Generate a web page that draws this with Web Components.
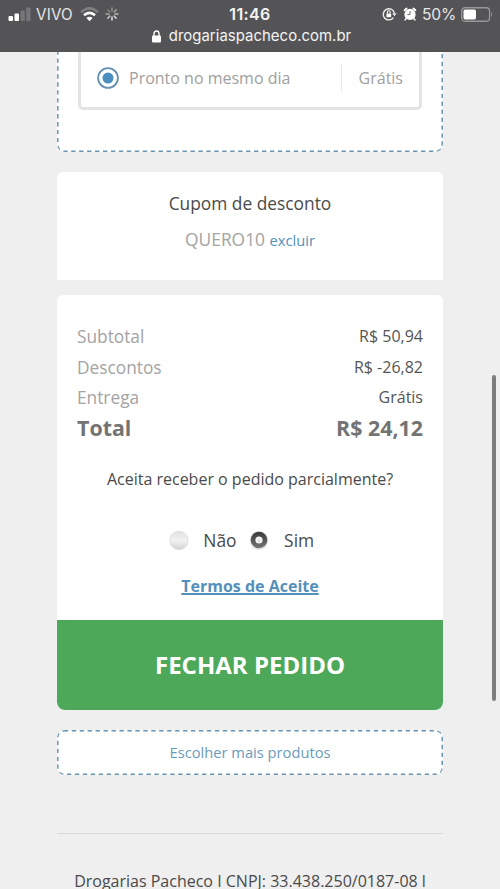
<!DOCTYPE html>
<html lang="pt-BR">
<head>
<meta charset="utf-8">
<title>Drogarias Pacheco</title>
<style>
html,body{margin:0;height:889px;overflow:hidden;background:#efefef}
body{font-family:"Open Sans","Noto Sans",sans-serif;color:#4a4a4a}
</style>
</head>
<body>
<checkout-page></checkout-page>
<script>
const define=(name,html)=>{
  const t=document.createElement('template');
  t.innerHTML=html;
  customElements.define(name,class extends HTMLElement{
    constructor(){super();this.attachShadow({mode:'open'}).append(t.content.cloneNode(true));}
  });
};

define('status-bar',`<style>
:host{display:block;flex:none;height:52px;background:#545456;color:#f4f4f4;font-family:Inter,sans-serif;overflow:hidden}
.top{display:grid;grid-template-columns:1fr auto 1fr;align-items:center;height:28px}
.l{display:flex;align-items:center;padding-left:8px}
.r{display:flex;align-items:center;justify-content:flex-end;padding-right:7px}
.c{font-weight:600;font-size:16px;letter-spacing:.35px}
.l span{font-size:15.2px;letter-spacing:.2px;margin:0 7px 0 5px;color:#e6e6e6}
.r span{font-size:15.6px;letter-spacing:-.2px;margin:0 5px 0 5px;color:#e6e6e6}
.url{display:flex;align-items:center;justify-content:center;height:16px;gap:8px;font-size:14.9px;letter-spacing:.05px;padding-left:3px}
svg{display:block;flex:none}
</style>
<div class="top">
<div class="l">
<svg width="23" height="15" viewBox="0 0 23 15"><g fill="#fff"><rect x=".5" y="9" width="4.5" height="5" rx="1"/><rect x="6.5" y="6.5" width="4.5" height="7.5" rx="1"/></g><g fill="#77777a"><rect x="12.5" y="3.5" width="4.3" height="10.5" rx="1"/><rect x="18.2" y="0.5" width="4.3" height="13.5" rx="1"/></g></svg>
<span>VIVO</span>
<svg width="19" height="15" viewBox="0 0 19 15" fill="none"><path d="M1 5.2Q9.5-2.4 18 5.2" stroke="#7d7d7f" stroke-width="2.7"/><path d="M4 8.3Q9.5 3.3 15 8.3" stroke="#fff" stroke-width="2.7"/><path d="M6.4 11Q9.5 8.6 12.6 11L9.5 14.2Z" fill="#fff"/></svg>
<svg style="margin-left:6px" width="14" height="14" viewBox="-7 -7 14 14" stroke-width="1.4" stroke-linecap="round"><path d="M0-3V-6" stroke="#999"/><path d="M2.1-2.1L4.2-4.2" stroke="#aaa"/><path d="M3 0H6" stroke="#bbb"/><path d="M2.1 2.1L4.2 4.2" stroke="#ddd"/><path d="M0 3V6" stroke="#eee"/><path d="M-2.1 2.1L-4.2 4.2" stroke="#ccc"/><path d="M-3 0H-6" stroke="#aaa"/><path d="M-2.1-2.1L-4.2-4.2" stroke="#888"/></svg>
</div>
<div class="c">11:46</div>
<div class="r">
<svg width="15" height="14" viewBox="0 0 15 14"><path d="M11.4 10.6A5.6 5.6 0 1 1 12.3 6" fill="none" stroke="#eee" stroke-width="1.4"/><path d="M10.2 6.2H14.6L12.4 9.2Z" fill="#eee"/><rect x="4.4" y="6.4" width="4.8" height="3.8" rx=".6" fill="#fff"/><path d="M5.4 6.6V5.2a1.4 1.4 0 0 1 2.8 0V6.6" fill="none" stroke="#fff" stroke-width="1.1"/></svg>
<svg style="margin-left:6px" width="14" height="14" viewBox="0 0 14 14"><circle cx="7" cy="7.4" r="5.6" fill="#fff"/><path d="M1.6 3.2L3.6 1.5M12.4 3.2L10.4 1.5" stroke="#fff" stroke-width="1.9" stroke-linecap="round"/><path d="M3.2 11.5L2 13M10.8 11.5L12 13" stroke="#fff" stroke-width="1.4" stroke-linecap="round"/><path d="M7 4V7.6H4.4" fill="none" stroke="#666" stroke-width="1"/></svg>
<span>50%</span>
<svg width="32" height="15" viewBox="0 0 32 15"><rect x=".75" y=".75" width="27.8" height="13.5" rx="3.2" fill="none" stroke="#98989a" stroke-width="1.3"/><rect x="2.5" y="2.5" width="12.5" height="10" rx="1.7" fill="#fff"/><path d="M30 5Q32 7.5 30 10Z" fill="#98989a"/></svg>
</div></div>
<div class="url"><svg width="9" height="13" viewBox="0 0 9 13"><rect y="5.5" width="9" height="7" rx="1.1" fill="#fff"/><path d="M2 6V3.7a2.5 2.7 0 0 1 5 0V6" fill="none" stroke="#fff" stroke-width="1.4"/></svg><span>drogariaspacheco.com.br</span></div>`);

define('dashed-panel',`<style>
:host{display:grid;width:386px;box-sizing:border-box;overflow:hidden;border-radius:8px;background:#fff}
svg,.b{grid-area:1/1;min-width:0}
svg{width:100%;height:100%;display:block}
rect{x:.8px;y:.8px;width:calc(100% - 1.6px);height:calc(100% - 1.6px);fill:none;stroke:#6894b2;stroke-width:1.5px;stroke-dasharray:4.4 3.55}
:host([open-top]){border-radius:0 0 8px 8px}
:host([open-top]) rect{y:-20px;height:calc(100% + 19.2px)}
</style><svg><rect rx="6"/></svg><div class="b"><slot></slot></div>`);

define('shipping-option',`<style>
:host{display:flex;align-items:center;box-sizing:border-box;width:344px;height:58px;margin:0 0 0 21px;border:3px solid #e4e4e4;border-top:0;border-radius:0 0 5px 5px;padding:0 16px 3px;color:#a0a0a0;font-size:16px}
svg{margin-right:10px;flex:none}
.p{margin-left:auto;border-left:1px solid #e8e8e8;height:28px;line-height:28px;padding-left:17px}
</style><svg width="22" height="22" viewBox="0 0 22 22"><circle cx="11" cy="11" r="9.9" fill="#fff" stroke="#6590b0" stroke-width="1.8"/><circle cx="11" cy="11" r="5.5" fill="#4b8fc0"/></svg><slot></slot><span class="p"><slot name="price"></slot></span>`);

define('coupon-card',`<style>
:host{display:block;height:108px;background:#fff;border-radius:6px 6px 0 0;text-align:center;box-sizing:border-box;padding-top:18px}
.t{font-size:17.35px;line-height:26px}
.v{font-size:17.4px;line-height:26px;margin-top:10px;color:#a3a3a3}
a{font-size:14.7px;color:#5490bb}
</style><div class="t"><slot></slot></div><div class="v"><slot name="code"></slot> <a>excluir</a></div>`);

define('summary-row',`<style>
:host{display:flex;justify-content:space-between;height:30.7px;line-height:30px;font-size:17.3px;color:#a3a3a3}
.v{color:#555;font-size:16px;line-height:28px}
:host([total]),:host([total]) .v{font-weight:700;color:#737373;font-size:21.4px;line-height:28px}
</style><span><slot></slot></span><span class="v"><slot name="value"></slot></span>`);

define('radio-choice',`<style>
:host{display:inline-flex;align-items:center;font-size:17.4px;line-height:24px}
svg{margin-right:13.5px}
.on{display:none}
:host([checked]) .on{display:block}
:host([checked]) .off{display:none}
:host([checked]) svg{margin:0 14.5px 0 -1px}
</style><svg width="22" height="22" viewBox="0 0 22 22"><defs><linearGradient id="g" x2="0" y2="1"><stop stop-color="#e2e2e2"/><stop offset=".5" stop-color="#f1f1f1"/><stop offset="1" stop-color="#d4d4d4"/></linearGradient><linearGradient id="d" x2="0" y2="1"><stop stop-color="#383838"/><stop offset="1" stop-color="#777"/></linearGradient></defs>
<g class="off"><circle cx="11" cy="11.5" r="9.2" fill="url(#g)" stroke="#d9d9d9" stroke-width=".8"/></g>
<g class="on"><circle cx="11" cy="11.5" r="9.4" fill="#e5e5e5"/><circle cx="11" cy="11" r="8.3" fill="url(#d)"/><circle cx="11" cy="11" r="3.6" fill="#f4f4f4"/><circle cx="11" cy="11.8" r="1.4" fill="#dcdcdc"/></g></svg><slot></slot>`);

define('order-card',`<style>
:host{display:flex;flex-direction:column;height:415px;background:#fff;border-radius:6px 6px 8px 8px;overflow:hidden;text-align:center}
.rows{padding:27px 20px 0}
.q{font-size:16px;line-height:24px;margin-top:22.4px}
.c{display:flex;justify-content:center;gap:12px;margin-top:37px;padding-right:18px}
.t{font-size:16px;font-weight:700;line-height:24px;margin-top:22px;color:#5490bb;text-decoration:underline;text-decoration-thickness:1.5px}
button{all:unset;margin-top:auto;height:90px;line-height:90px;background:#4ea85a;color:#fff;font-size:24px;font-weight:700;text-align:center}
</style><div class="rows"><slot name="rows"></slot></div><div class="q"><slot name="question"></slot></div><div class="c"><slot name="choices"></slot></div><div class="t"><slot name="terms"></slot></div><button><slot name="action"></slot></button>`);

define('scroll-thumb',`<style>:host{position:absolute;left:491.5px;top:375px;width:4.5px;height:326px;border-radius:3px;background:#7d7d7d}</style>`);

define('checkout-page',`<style>
:host{display:flex;flex-direction:column;width:500px;height:889px;overflow:hidden;position:relative}
main{width:386px;margin-left:57px;display:flex;flex-direction:column}
.ship{height:100px}
coupon-card{margin-top:20px}
order-card{margin-top:15px}
.more{height:45px;margin-top:20px;text-align:center;color:#6b9bbc;font-size:14.7px;line-height:44px}
footer{margin-top:58px;border-top:1px solid #d8d8d8;padding-top:39px;text-align:center;font-size:16px;line-height:16px;white-space:nowrap}
</style>
<status-bar></status-bar>
<main>
<dashed-panel class="ship" open-top><shipping-option>Pronto no mesmo dia<span slot="price">Grátis</span></shipping-option></dashed-panel>
<coupon-card>Cupom de desconto<span slot="code">QUERO10</span></coupon-card>
<order-card>
<summary-row slot="rows">Subtotal<span slot="value">R$ 50,94</span></summary-row>
<summary-row slot="rows">Descontos<span slot="value">R$ -26,82</span></summary-row>
<summary-row slot="rows">Entrega<span slot="value">Grátis</span></summary-row>
<summary-row slot="rows" total>Total<span slot="value">R$ 24,12</span></summary-row>
<span slot="question">Aceita receber o pedido parcialmente?</span>
<radio-choice slot="choices">Não</radio-choice><radio-choice slot="choices" checked>Sim</radio-choice>
<span slot="terms">Termos de Aceite</span>
<span slot="action">FECHAR PEDIDO</span>
</order-card>
<dashed-panel class="more">Escolher mais produtos</dashed-panel>
<footer>Drogarias Pacheco I CNPJ: 33.438.250/0187-08 l</footer>
</main>
<scroll-thumb></scroll-thumb>`);
</script>
</body>
</html>
